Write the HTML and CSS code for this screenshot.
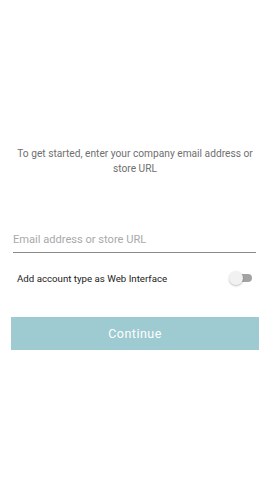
FILE: index.html
```html
<!DOCTYPE html>
<html lang="en">
<head>
  <meta charset="UTF-8">
  <meta name="viewport" content="width=device-width, initial-scale=1">
  <title>Sign in</title>
  <link rel="stylesheet" href="styles.css">
</head>
<body>
  <div class="screen">
    <p class="intro">To get started, enter your company email address or store URL</p>

    <div class="field">
      <input type="text" placeholder="Email address or store URL">
    </div>

    <div class="toggle-row">
      <span>Add account type as Web Interface</span>
      <label class="switch">
        <span class="track"></span>
        <span class="thumb"></span>
      </label>
    </div>

    <button type="button" class="continue">Continue</button>
  </div>
</body>
</html>
```

FILE: styles.css
```css
body {
  margin: 0;
  background: #fff;
  font-family: Roboto, "Noto Sans", sans-serif;
}

.screen {
  padding: 146px 11px 0 11px;
}

.intro {
  margin: 0;
  text-align: center;
  font-size: 10.2px;
  line-height: 15px;
  color: #6f6f6f;
}

.field {
  margin: 52px 3px 0 2px;
  border-bottom: 1px solid #8a8a8a;
}

.field input {
  width: 100%;
  box-sizing: border-box;
  border: none;
  outline: none;
  padding: 0 0 6px 0;
  font-family: inherit;
  font-size: 11.1px;
  color: #333;
  background: transparent;
}

.field input::placeholder {
  color: #a9a9a9;
}

.toggle-row {
  display: flex;
  align-items: center;
  justify-content: space-between;
  margin: 17px 6px 0 6px;
  height: 16px;
  font-size: 9.7px;
  color: #222;
}

.switch {
  position: relative;
  width: 24px;
  height: 16px;
}

.track {
  position: absolute;
  left: 6px;
  top: 4px;
  width: 17px;
  height: 8px;
  border-radius: 4px;
  background: #a3a3a3;
}

.thumb {
  position: absolute;
  left: 0;
  top: 1px;
  width: 14px;
  height: 14px;
  border-radius: 50%;
  background: #f1f1f1;
  box-shadow: 0 1px 2px rgba(0,0,0,0.25);
}

.continue {
  display: block;
  width: 100%;
  height: 33px;
  margin-top: 31px;
  border: none;
  background: #9ecad1;
  color: #fff;
  font-family: inherit;
  font-size: 12.5px;
  font-weight: 400;
  letter-spacing: 0.5px;
}
```
